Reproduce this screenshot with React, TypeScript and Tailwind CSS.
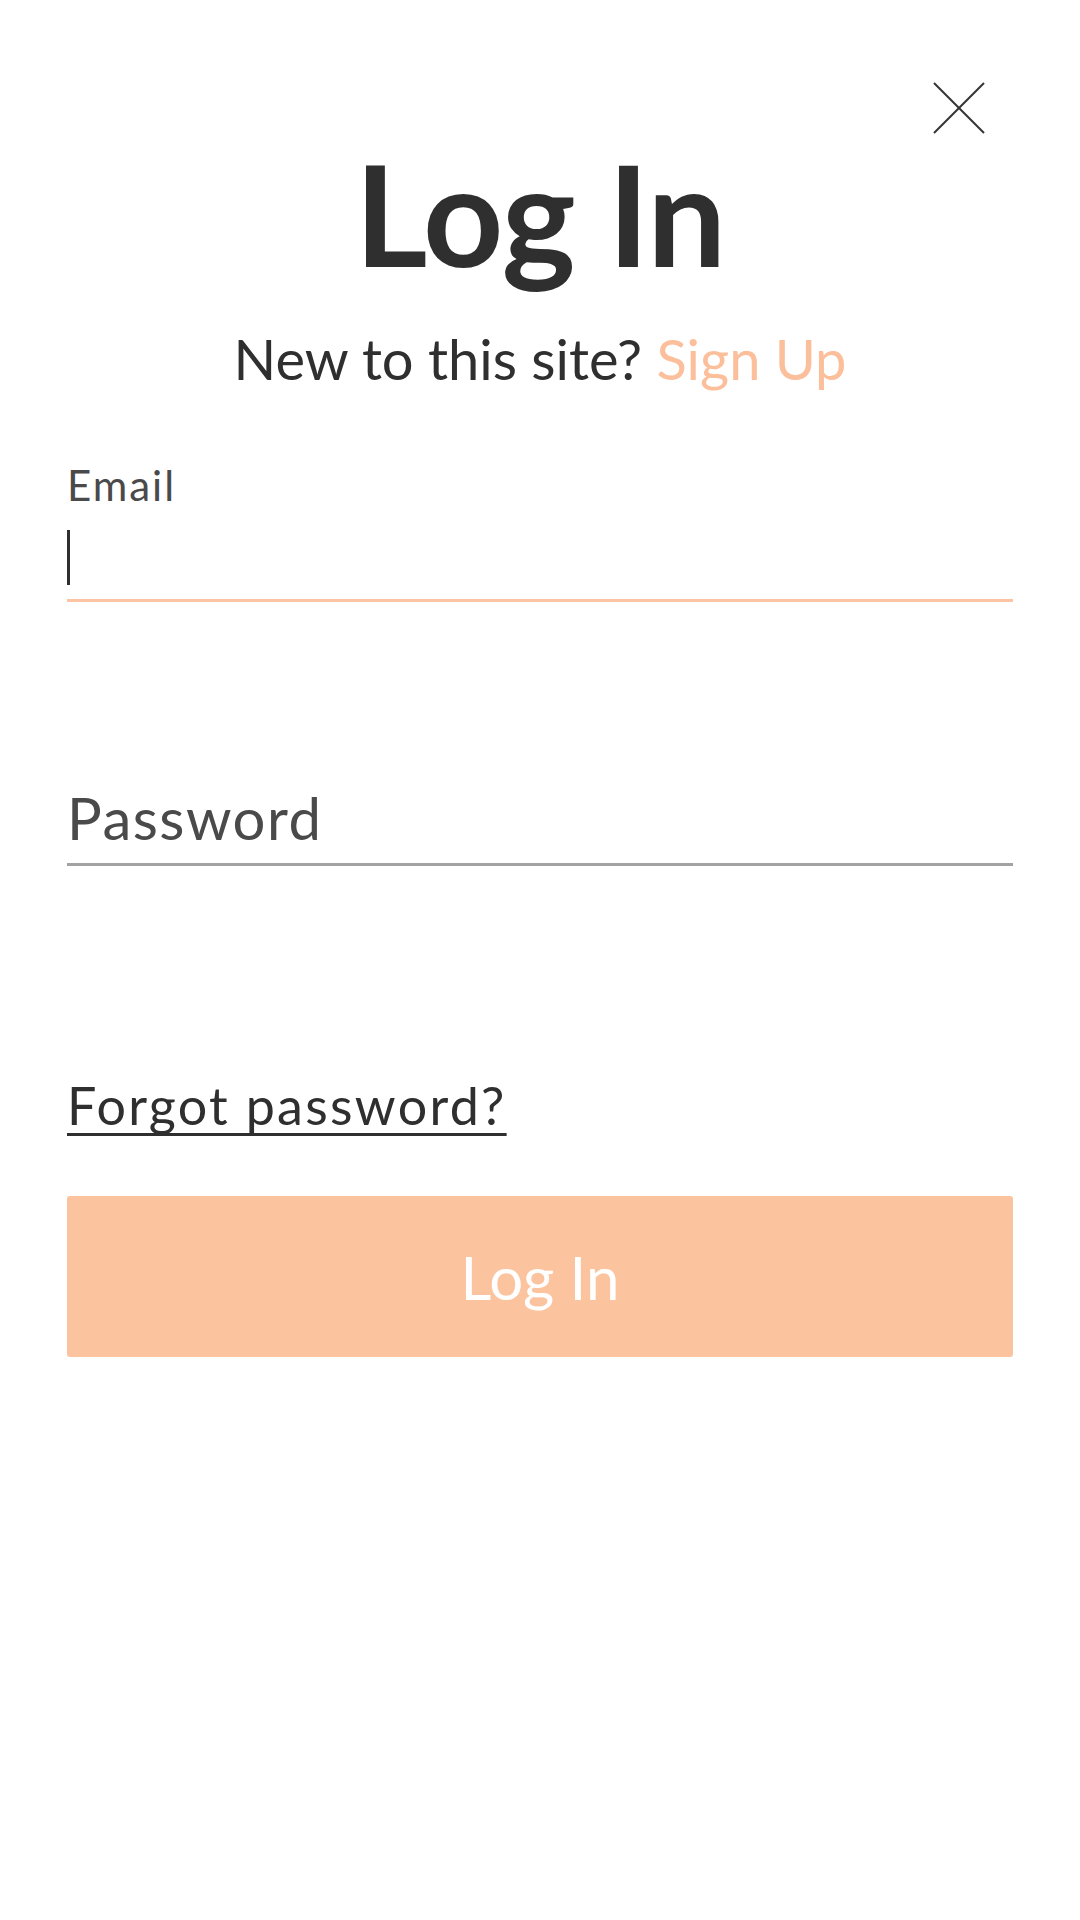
const CloseIcon = () => (
  <svg width="52" height="52" viewBox="0 0 52 52" fill="none" stroke="#333333" strokeWidth="2">
    <line x1="1" y1="1" x2="51" y2="51" />
    <line x1="51" y1="1" x2="1" y2="51" />
  </svg>
);

const App = () => {
  return (
    <div className="w-[1080px] min-h-[1920px] bg-white font-['Lato',sans-serif] text-[#2f2f2f]">
      <div className="flex justify-end pt-[82px] pr-[95px]">
        <button className="w-[52px] h-[52px]" aria-label="Close">
          <CloseIcon />
        </button>
      </div>

      <h1 className="mt-[9px] text-center text-[140px] leading-none font-bold tracking-[-1px]">
        Log In
      </h1>

      <p className="mt-[48px] text-center text-[56px] leading-none">
        New to this site? <span className="text-[#fcbf9b] cursor-pointer">Sign Up</span>
      </p>

      <form className="px-[67px] flex flex-col">
        <label className="mt-[77px] text-[42px] leading-none text-[#4a4a4a] tracking-[2px]">
          Email
        </label>
        <div className="pt-[24px] pb-[14px] border-b-[3px] border-[#fcc4a2]">
          <div className="w-[3px] h-[55px] bg-[#2f2f2f]" />
        </div>

        <div className="mt-[187px] pb-[16px] border-b-[3px] border-[#a3a3a3]">
          <span className="block text-[58px] leading-none text-[#4a4a4a] tracking-[1.5px]">
            Password
          </span>
        </div>

        <a className="mt-[213px] self-start text-[52px] leading-none tracking-[2.3px] underline decoration-[3px] underline-offset-[8px] [text-decoration-skip-ink:none] cursor-pointer">
          Forgot password?
        </a>

        <button
          type="button"
          className="mt-[65px] h-[161px] w-full rounded-[3px] bg-[#fcc39f] text-white text-[60px] leading-none"
        >
          Log In
        </button>
      </form>
    </div>
  );
};

export default App;
